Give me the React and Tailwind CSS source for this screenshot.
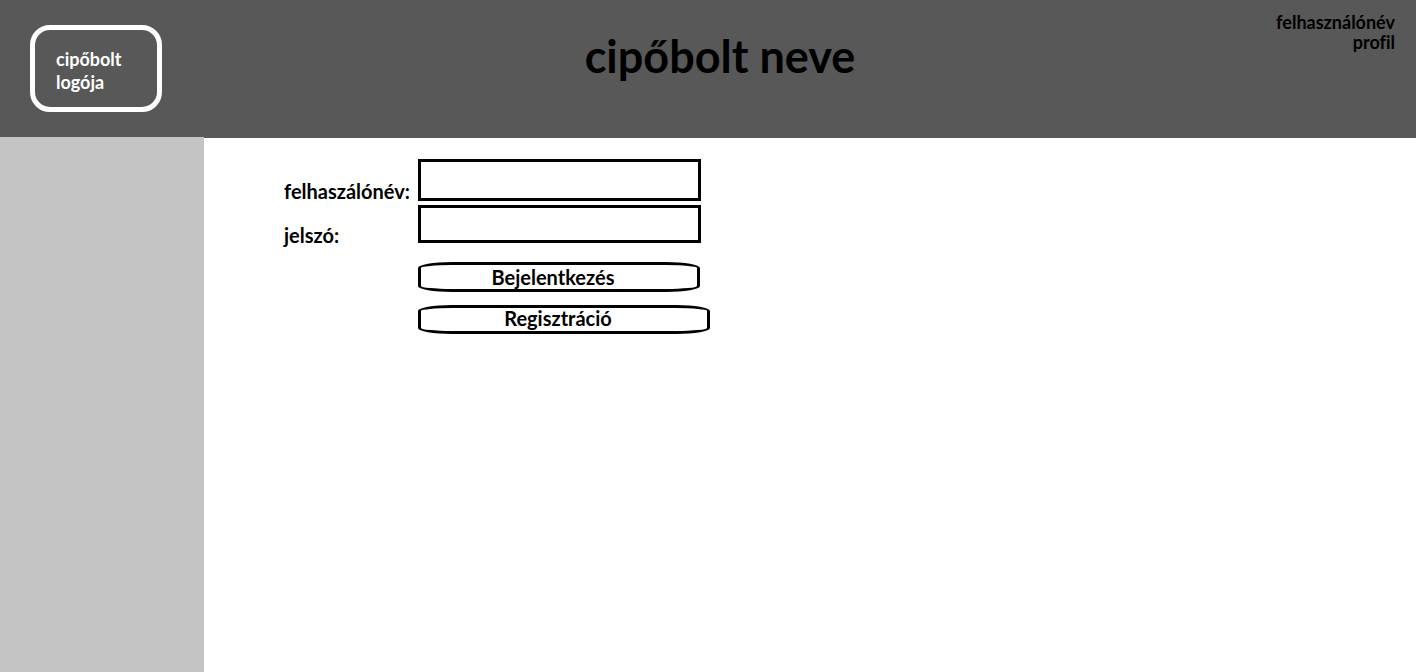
export default function App() {
  return (
    <div className="flex min-h-screen flex-col bg-white font-['Lato','Liberation_Sans',sans-serif] font-bold text-black [font-variant-ligatures:none]">
      <header className="grid h-[138px] grid-cols-[1fr_auto_1fr] items-start bg-[#585858]">
        <a href="#" className="mt-[25px] ml-[30px] flex h-[87px] w-[132px] items-center rounded-[20px] border-5 border-white pt-1 pl-[21px] text-lg leading-[23px] text-white">
          <span>cipőbolt<br />logója</span>
        </a>
        <h1 className="mt-7 ml-6 text-[45px] leading-[56px]">cipőbolt neve</h1>
        <nav className="mt-3 mr-[21px] flex flex-col items-end text-lg leading-5">
          <a href="#">felhasználónév</a>
          <a href="#">profil</a>
        </nav>
      </header>
      <div className="flex flex-1">
        <aside className="-mt-px w-[204px] shrink-0 bg-[#c3c3c3]" />
        <main className="flex-1 pt-[21px] pl-20">
          <form className="grid grid-cols-[134px_292px] text-xl leading-5" onSubmit={(e) => e.preventDefault()}>
            <label htmlFor="user" className="pt-[22px]">felhaszálónév:</label>
            <input id="user" type="text" className="h-[42px] w-[283px] border-3 border-black px-2" />
            <label htmlFor="password" className="pt-6">jelszó:</label>
            <input id="password" type="password" className="mt-1 h-[38px] w-[283px] border-3 border-black px-2" />
            <button type="submit" className="col-start-2 mt-[17px] h-[30px] w-[282px] rounded-[34px/6px] border-3 border-black pr-3">Bejelentkezés</button>
            <button type="button" className="col-start-2 mt-[13px] h-[29px] w-[292px] rounded-[34px/6px] border-3 border-black pr-3 pb-1">Regisztráció</button>
          </form>
        </main>
      </div>
    </div>
  );
}
